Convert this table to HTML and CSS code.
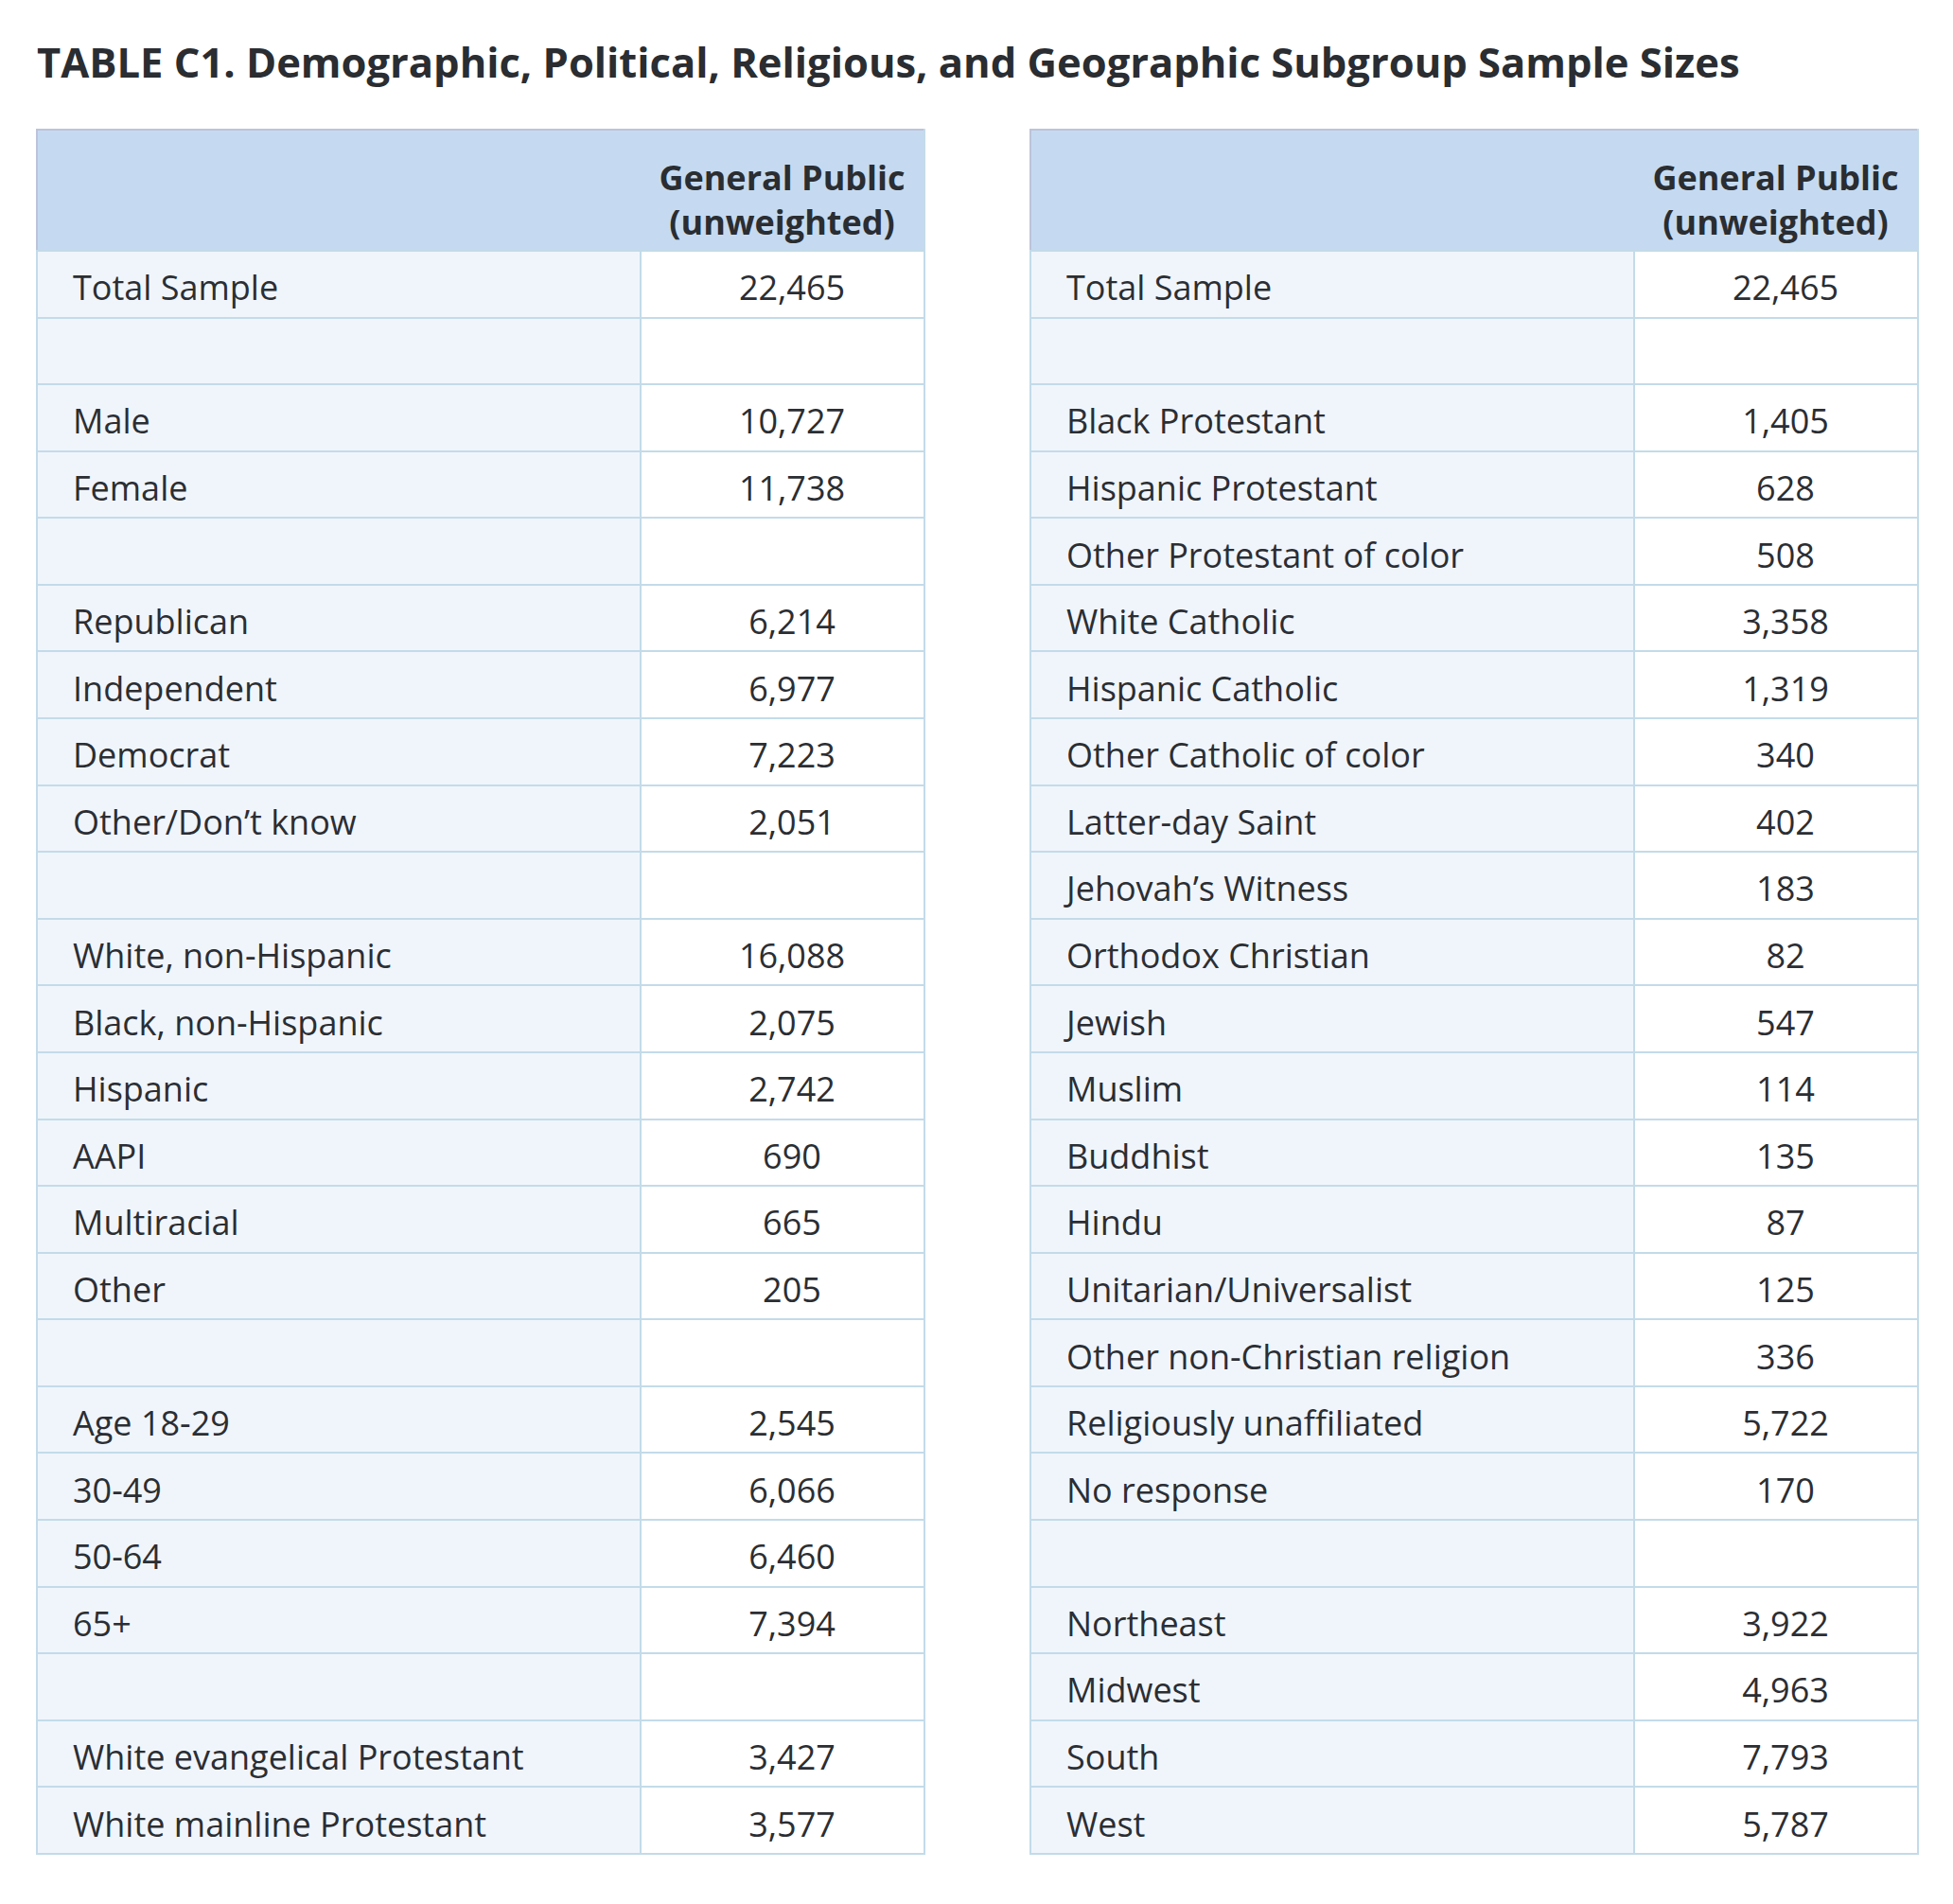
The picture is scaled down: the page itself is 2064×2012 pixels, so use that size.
FILE: index.html
```html
<!DOCTYPE html>
<html lang="en">
<head>
<meta charset="utf-8">
<title>Table C1</title>
<link rel="stylesheet" href="styles.css">
</head>
<body>
<div class="page">
  <h1 class="title">TABLE C1. Demographic, Political, Religious, and Geographic Subgroup Sample Sizes</h1>
  <div class="tables">
    <table class="data">
      <colgroup><col class="c-label"><col class="c-val"></colgroup>
      <thead>
        <tr><th class="h-label"></th><th class="h-val">General Public<br>(unweighted)</th></tr>
      </thead>
      <tbody>
        <tr><td class="lbl">Total Sample</td><td class="val">22,465</td></tr>
        <tr><td class="lbl"></td><td class="val"></td></tr>
        <tr><td class="lbl">Male</td><td class="val">10,727</td></tr>
        <tr><td class="lbl">Female</td><td class="val">11,738</td></tr>
        <tr><td class="lbl"></td><td class="val"></td></tr>
        <tr><td class="lbl">Republican</td><td class="val">6,214</td></tr>
        <tr><td class="lbl">Independent</td><td class="val">6,977</td></tr>
        <tr><td class="lbl">Democrat</td><td class="val">7,223</td></tr>
        <tr><td class="lbl">Other/Don’t know</td><td class="val">2,051</td></tr>
        <tr><td class="lbl"></td><td class="val"></td></tr>
        <tr><td class="lbl">White, non-Hispanic</td><td class="val">16,088</td></tr>
        <tr><td class="lbl">Black, non-Hispanic</td><td class="val">2,075</td></tr>
        <tr><td class="lbl">Hispanic</td><td class="val">2,742</td></tr>
        <tr><td class="lbl">AAPI</td><td class="val">690</td></tr>
        <tr><td class="lbl">Multiracial</td><td class="val">665</td></tr>
        <tr><td class="lbl">Other</td><td class="val">205</td></tr>
        <tr><td class="lbl"></td><td class="val"></td></tr>
        <tr><td class="lbl">Age 18-29</td><td class="val">2,545</td></tr>
        <tr><td class="lbl">30-49</td><td class="val">6,066</td></tr>
        <tr><td class="lbl">50-64</td><td class="val">6,460</td></tr>
        <tr><td class="lbl">65+</td><td class="val">7,394</td></tr>
        <tr><td class="lbl"></td><td class="val"></td></tr>
        <tr><td class="lbl">White evangelical Protestant</td><td class="val">3,427</td></tr>
        <tr><td class="lbl">White mainline Protestant</td><td class="val">3,577</td></tr>
      </tbody>
    </table>
    <table class="data">
      <colgroup><col class="c-label"><col class="c-val"></colgroup>
      <thead>
        <tr><th class="h-label"></th><th class="h-val">General Public<br>(unweighted)</th></tr>
      </thead>
      <tbody>
        <tr><td class="lbl">Total Sample</td><td class="val">22,465</td></tr>
        <tr><td class="lbl"></td><td class="val"></td></tr>
        <tr><td class="lbl">Black Protestant</td><td class="val">1,405</td></tr>
        <tr><td class="lbl">Hispanic Protestant</td><td class="val">628</td></tr>
        <tr><td class="lbl">Other Protestant of color</td><td class="val">508</td></tr>
        <tr><td class="lbl">White Catholic</td><td class="val">3,358</td></tr>
        <tr><td class="lbl">Hispanic Catholic</td><td class="val">1,319</td></tr>
        <tr><td class="lbl">Other Catholic of color</td><td class="val">340</td></tr>
        <tr><td class="lbl">Latter-day Saint</td><td class="val">402</td></tr>
        <tr><td class="lbl">Jehovah’s Witness</td><td class="val">183</td></tr>
        <tr><td class="lbl">Orthodox Christian</td><td class="val">82</td></tr>
        <tr><td class="lbl">Jewish</td><td class="val">547</td></tr>
        <tr><td class="lbl">Muslim</td><td class="val">114</td></tr>
        <tr><td class="lbl">Buddhist</td><td class="val">135</td></tr>
        <tr><td class="lbl">Hindu</td><td class="val">87</td></tr>
        <tr><td class="lbl">Unitarian/Universalist</td><td class="val">125</td></tr>
        <tr><td class="lbl">Other non-Christian religion</td><td class="val">336</td></tr>
        <tr><td class="lbl">Religiously unaffiliated</td><td class="val">5,722</td></tr>
        <tr><td class="lbl">No response</td><td class="val">170</td></tr>
        <tr><td class="lbl"></td><td class="val"></td></tr>
        <tr><td class="lbl">Northeast</td><td class="val">3,922</td></tr>
        <tr><td class="lbl">Midwest</td><td class="val">4,963</td></tr>
        <tr><td class="lbl">South</td><td class="val">7,793</td></tr>
        <tr><td class="lbl">West</td><td class="val">5,787</td></tr>
      </tbody>
    </table>
  </div>
</div>
</body>
</html>
```

FILE: styles.css
```css
html, body {
  margin: 0;
  padding: 0;
  background: #ffffff;
}

body {
  font-family: "Open Sans", "Noto Sans", "Liberation Sans", sans-serif;
  color: #2b2e33;
}

.page {
  padding: 39px 0 0 38px;
}

.title {
  margin: 0 0 44px 1px;
  font-size: 43.5px;
  line-height: 53px;
  font-weight: 700;
  color: #2a2d31;
  white-space: nowrap;
}

.tables {
  display: flex;
  gap: 110px;
  align-items: flex-start;
}

.data {
  width: 938px;
  table-layout: fixed;
  border-collapse: collapse;
  border: 2px solid #c3dbe9;
}

.c-label { width: 638px; }
.c-val { width: 300px; }

.data thead tr {
  background: #c5daf0;
}

.data th {
  height: 128px;
  box-sizing: border-box;
  padding: 0 16px 6px 16px;
  vertical-align: bottom;
  text-align: center;
  font-size: 36px;
  line-height: 47px;
  font-weight: 700;
  color: #2a2d31;
  border-top: 2px solid #bcc3da;
  border-bottom: 2px solid #c3dbe9;
}

.data th.h-label {
  border-left: 2px solid #bcc3da;
}

.data th.h-val {
  border-right: 2px solid #c3dbe9;
}

.data td {
  height: 70.58px;
  box-sizing: border-box;
  padding: 8px 0 0 0;
  font-size: 36px;
  line-height: 48px;
  vertical-align: middle;
  border: 2px solid #c3dbe9;
  white-space: nowrap;
}

.data td.lbl {
  background: #f0f5fc;
  padding-left: 37px;
  text-align: left;
}

.data td.val {
  background: #ffffff;
  text-align: center;
  padding-left: 20px;
  padding-right: 0;
}
```
